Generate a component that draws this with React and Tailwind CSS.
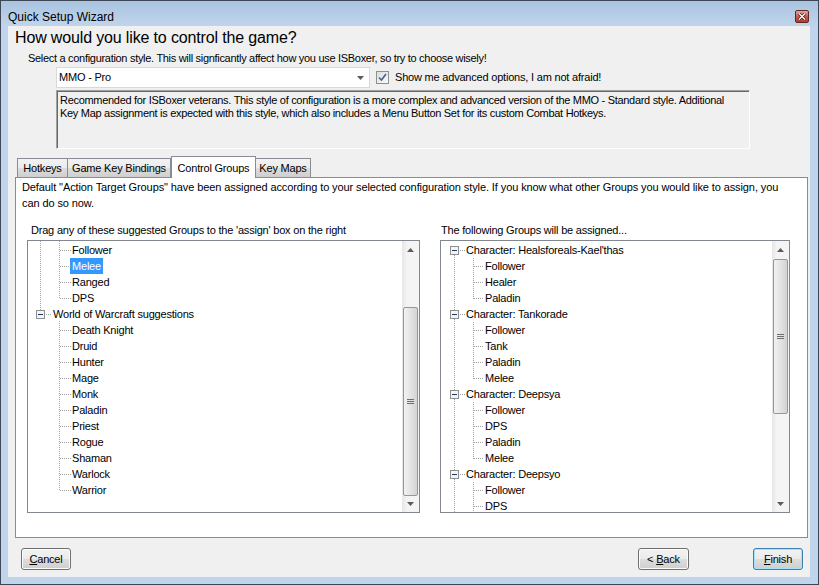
import React from "react";

const leftRows = [
  { t: "Follower", lvl: 1 },
  { t: "Melee", lvl: 1, sel: true },
  { t: "Ranged", lvl: 1 },
  { t: "DPS", lvl: 1 },
  { t: "World of Warcraft suggestions", lvl: 0 },
  { t: "Death Knight", lvl: 1 },
  { t: "Druid", lvl: 1 },
  { t: "Hunter", lvl: 1 },
  { t: "Mage", lvl: 1 },
  { t: "Monk", lvl: 1 },
  { t: "Paladin", lvl: 1 },
  { t: "Priest", lvl: 1 },
  { t: "Rogue", lvl: 1 },
  { t: "Shaman", lvl: 1 },
  { t: "Warlock", lvl: 1 },
  { t: "Warrior", lvl: 1 },
];

const rightRows = [
  { t: "Character: Healsforeals-Kael'thas", lvl: 0 },
  { t: "Follower", lvl: 1 },
  { t: "Healer", lvl: 1 },
  { t: "Paladin", lvl: 1 },
  { t: "Character: Tankorade", lvl: 0 },
  { t: "Follower", lvl: 1 },
  { t: "Tank", lvl: 1 },
  { t: "Paladin", lvl: 1 },
  { t: "Melee", lvl: 1 },
  { t: "Character: Deepsya", lvl: 0 },
  { t: "Follower", lvl: 1 },
  { t: "DPS", lvl: 1 },
  { t: "Paladin", lvl: 1 },
  { t: "Melee", lvl: 1 },
  { t: "Character: Deepsyo", lvl: 0 },
  { t: "Follower", lvl: 1 },
  { t: "DPS", lvl: 1 },
];

// row centre inside the tree box
const cy = (i) => 9 + 16 * i;

// vertical guide lines [x, y1, y2]
const leftLines = [
  [12, 0, 68],
  [31, 0, cy(3)],
  [31, 80, cy(15)],
];
const rightLines = [
  [13, 14, 68],
  [13, 78, 148],
  [13, 158, 228],
  [13, 238, 271],
  [32, 17, cy(3)],
  [32, 81, cy(8)],
  [32, 161, cy(13)],
  [32, 241, 271],
];

function TreeLines({ rows, lines, dx }) {
  return (
    <svg className="absolute left-0 top-0" width="60" height="271" shapeRendering="crispEdges">
      {lines.map(([x, y1, y2], i) => (
        <line key={i} x1={x + 0.5} y1={y1} x2={x + 0.5} y2={y2 + 1} stroke="#a0a0a0" strokeDasharray="1 1" />
      ))}
      {rows.map((r, i) =>
        r.lvl === 1 ? (
          <line key={"h" + i} x1={33 + dx} y1={cy(i) + 0.5} x2={43} y2={cy(i) + 0.5} stroke="#a0a0a0" strokeDasharray="1 1" />
        ) : (
          <g key={"b" + i}>
            <line x1={19 + dx} y1={cy(i) + 0.5} x2={24} y2={cy(i) + 0.5} stroke="#a0a0a0" strokeDasharray="1 1" />
            <rect x={9.5 + dx} y={cy(i) - 3.5} width="8" height="8" fill="#f4f4f4" stroke="#8e8f8f" />
            <line x1={11 + dx} y1={cy(i) + 0.5} x2={16 + dx} y2={cy(i) + 0.5} stroke="#1f3a62" />
          </g>
        )
      )}
    </svg>
  );
}

function Arrow({ down }) {
  return (
    <svg width="7" height="4" viewBox="0 0 7 4">
      <path d={down ? "M0 0 L7 0 L3.5 4 Z" : "M0 4 L7 4 L3.5 0 Z"} fill="#5b5b5b" />
    </svg>
  );
}

function ScrollBar({ thumb }) {
  return (
    <div className="relative h-full w-[17px] bg-[linear-gradient(to_right,#e6e6e6,#f4f4f4_30%,#f4f4f4)]">
      <div className="flex h-[17px] items-center justify-center">
        <Arrow />
      </div>
      <div className={`absolute left-px right-px flex items-center justify-center rounded-[2px] border border-[#979797] bg-[linear-gradient(to_right,#f2f2f2,#e3e3e3_50%,#d3d3d3)] ${thumb}`}>
        <div className="flex flex-col gap-px">
          <div className="h-px w-[7px] bg-[#6f6f6f]" />
          <div className="h-px w-[7px] bg-[#6f6f6f]" />
          <div className="h-px w-[7px] bg-[#6f6f6f]" />
        </div>
      </div>
      <div className="absolute bottom-0 left-0 flex h-[17px] w-[17px] items-center justify-center">
        <Arrow down />
      </div>
    </div>
  );
}

function Tree({ rows, lines, thumb, width, dx = 0 }) {
  return (
    <div className={`flex h-[273px] border border-[#828790] bg-white ${width}`}>
      <div className="relative flex-1 overflow-hidden pt-px">
        <TreeLines rows={rows} lines={lines} dx={dx} />
        {rows.map((r, i) => (
          <div key={i} className={`flex h-4 items-center ${r.lvl === 1 ? "pl-[42px]" : "pl-[23px]"}`}>
            <span className={`px-[2px] leading-4 whitespace-nowrap ${r.sel ? "bg-[#3399ff] text-white" : ""}`}>{r.t}</span>
          </div>
        ))}
      </div>
      <ScrollBar thumb={thumb} />
    </div>
  );
}

function Tab({ label, sel, w }) {
  if (sel) {
    return (
      <div className={`relative z-10 -mb-px flex h-[22px] items-start justify-center border border-b-0 border-[#898c95] bg-white pt-[3px] ${w}`}>
        {label}
      </div>
    );
  }
  return (
    <div className={`flex h-[19px] items-center justify-center border border-b-0 border-[#898c95] bg-[linear-gradient(to_bottom,#f2f2f2_0%,#ebebeb_50%,#dddddd_50%,#cfcfcf_100%)] ${w}`}>
      {label}
    </div>
  );
}

function Btn({ children, def, w }) {
  return (
    <div
      className={`flex h-[22px] items-center justify-center rounded-[3px] border bg-[linear-gradient(to_bottom,#f2f2f2_0%,#ebebeb_50%,#dddddd_50%,#cfcfcf_100%)] ${
        def ? "border-[#3c7fb1] shadow-[inset_0_0_0_1px_#a6e3fb]" : "border-[#707070] shadow-[inset_0_0_0_1px_#fbfbfb]"
      } ${w}`}
    >
      {children}
    </div>
  );
}

export default function App() {
  return (
    <div className="flex h-[585px] w-[819px] flex-col border border-[#3e4856] bg-[#c0d5eb] font-['Liberation_Sans',Arial,sans-serif] text-[11px] tracking-[-0.2px] text-black">
      {/* title bar */}
      <div className="relative h-[25px] bg-[linear-gradient(to_bottom,#a9c3e0,#c0d5eb)] pl-[7px] pt-[9px] text-[12px] leading-[14px] tracking-normal">
        Quick Setup Wizard
        <div className="absolute right-[9px] top-[9px] flex h-[13px] w-[14px] items-center justify-center rounded-[2px] border border-[#5e2a24] bg-[linear-gradient(to_bottom,#e3a79f,#c75a4d_50%,#b8382b)]">
          <svg width="8" height="7" viewBox="0 0 8 7">
            <path d="M1 0.5 L7 6.5 M7 0.5 L1 6.5" stroke="#3a1410" strokeWidth="2.6" />
            <path d="M1 0.5 L7 6.5 M7 0.5 L1 6.5" stroke="#ffffff" strokeWidth="1.4" />
          </svg>
        </div>
      </div>

      {/* client area */}
      <div className="ml-[7px] flex h-[551px] w-[802px] flex-col bg-[#f0f0f0]">
        <div className="pl-[7px] pt-[2px] text-[16px] leading-[20px] tracking-[-0.15px]">How would you like to control the game?</div>
        <div className="mt-[4px] pl-[20px] leading-[13px] tracking-[-0.3px]">
          Select a configuration style. This will signficantly affect how you use ISBoxer, so try to choose wisely!
        </div>

        <div className="mt-[2px] flex h-[21px] items-center pl-[48px]">
          <div className="flex h-[21px] w-[314px] items-center justify-between border border-[#d9d9d9] bg-white pl-[2px] pr-[5px]">
            <span>MMO - Pro</span>
            <Arrow down />
          </div>
          <div className="ml-[6px] flex h-[13px] w-[13px] items-center justify-center border border-[#8e8f8f] bg-[linear-gradient(to_bottom_right,#dcdcdc,#fbfbfb)]">
            <svg width="9" height="9" viewBox="0 0 9 9">
              <path d="M1 4.5 L3.5 7 L8 1" fill="none" stroke="#4a5f97" strokeWidth="1.6" />
            </svg>
          </div>
          <span className="ml-[6px]">Show me advanced options, I am not afraid!</span>
        </div>

        <div className="ml-[48px] mt-[2px] h-[59px] w-[694px] whitespace-nowrap border border-b-white border-l-[#a0a0a0] border-r-white border-t-[#a0a0a0] pl-[3px] pt-[3px] leading-[13px] tracking-[-0.3px] shadow-[inset_1px_1px_0_#696969]">
          Recommended for ISBoxer veterans. This style of configuration is a more complex and advanced version of the MMO - Standard style. Additional
          <br />
          Key Map assignment is expected with this style, which also includes a Menu Button Set for its custom Combat Hotkeys.
        </div>

        {/* tabs */}
        <div className="ml-[9px] mt-[7px] flex h-[21px] items-end">
          <Tab label="Hotkeys" w="w-[51px]" />
          <Tab label="Game Key Bindings" w="w-[103px] border-l-0" />
          <Tab label="Control Groups" sel w="w-[85px]" />
          <Tab label="Key Maps" w="w-[55px] border-l-0" />
        </div>

        <div className="ml-[7px] h-[361px] w-[793px] border border-[#898c95] bg-white pl-[6px] pt-px">
          <div className="whitespace-nowrap leading-[16px] tracking-[-0.1px]">
            Default "Action Target Groups" have been assigned according to your selected configuration style. If you know what other Groups you would like to assign, you
            <br />
            can do so now.
          </div>
          <div className="ml-[5px] mt-[13px] flex gap-[20px]">
            <div className="flex flex-col">
              <div className="pl-[4px] leading-[13px]">Drag any of these suggested Groups to the 'assign' box on the right</div>
              <div className="mt-[3px]">
                <Tree rows={leftRows} lines={leftLines} thumb="top-[66px] h-[189px]" width="w-[393px]" dx={-1} />
              </div>
            </div>
            <div className="flex flex-col">
              <div className="pl-px leading-[13px]">The following Groups will be assigned...</div>
              <div className="mt-[3px]">
                <Tree rows={rightRows} lines={rightLines} thumb="top-[18px] h-[155px]" width="w-[350px]" />
              </div>
            </div>
          </div>
        </div>

        {/* buttons */}
        <div className="mt-[10px] flex items-center pl-[13px] pr-[7px]">
          <Btn w="w-[50px]">
            <span>
              <u>C</u>ancel
            </span>
          </Btn>
          <div className="flex-1" />
          <Btn w="w-[51px]">
            <span>
              &lt; <u>B</u>ack
            </span>
          </Btn>
          <div className="w-[64px]" />
          <Btn def w="w-[50px]">
            <span>
              <u>F</u>inish
            </span>
          </Btn>
        </div>
      </div>
    </div>
  );
}
